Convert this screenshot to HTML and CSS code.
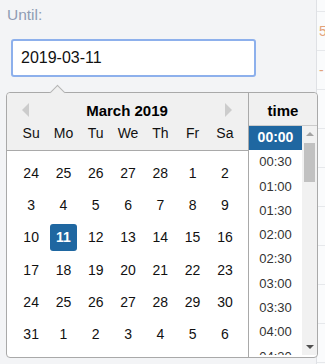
FILE: index.html
```html
<!DOCTYPE html>
<html lang="en">
<head>
    <meta charset="UTF-8">
    <meta name="viewport" content="width=device-width, initial-scale=1.0">
    <title>Until date picker</title>
    <link rel="stylesheet" href="styles.css">
</head>
<body>

    <div class="page">
        <!-- Filter form -->
        <div class="form-col">
            <label class="field-label" for="until">Until:</label>
            <div class="input-wrap">
                <input type="text" id="until" class="date-input" value="2019-03-11">

                <!-- Date/time picker popup -->
                <div class="picker">
                    <div class="picker-arrow"></div>

                    <div class="calendar">
                        <div class="cal-head">
                            <div class="cal-title">
                                <span class="nav prev"></span>
                                <span class="month">March 2019</span>
                                <span class="nav next"></span>
                            </div>
                            <div class="cal-grid weekdays">
                                <span>Su</span><span>Mo</span><span>Tu</span><span>We</span><span>Th</span><span>Fr</span><span>Sa</span>
                            </div>
                        </div>
                        <div class="cal-grid days" id="days"></div>
                    </div>

                    <div class="times">
                        <div class="times-head">time</div>
                        <div class="times-body">
                            <ul class="time-list" id="timeList"></ul>
                            <div class="scrollbar">
                                <span class="sb-arrow up"></span>
                                <span class="sb-thumb"></span>
                                <span class="sb-arrow down"></span>
                            </div>
                        </div>
                    </div>
                </div>
            </div>
        </div>

        <!-- Table behind, mostly hidden -->
        <div class="side-table">
            <div class="side-row first"></div>
            <div class="side-row"><span class="mark">5</span></div>
            <div class="side-row"><span class="mark">-</span></div>
            <div class="side-row"></div>
            <div class="side-row"></div>
            <div class="side-row"></div>
            <div class="side-row"></div>
            <div class="side-row"></div>
            <div class="side-row"></div>
            <div class="side-row"></div>
        </div>
    </div>

    <script>
        // March 2019 grid, starting on Sunday Feb 24
        var days = [24, 25, 26, 27, 28];
        for (var d = 1; d <= 31; d++) days.push(d);
        for (var n = 1; n <= 6; n++) days.push(n);

        var daysDiv = document.getElementById("days");
        days.forEach(function (day, i) {
            var cell = document.createElement("span");
            cell.className = "day";
            if (i === 15) cell.className += " selected";
            cell.textContent = day;
            daysDiv.appendChild(cell);
        });

        // only the slots that show in the list
        var list = document.getElementById("timeList");
        for (var h = 0; h < 5; h++) {
            ["00", "30"].forEach(function (m) {
                var li = document.createElement("li");
                li.textContent = ("0" + h).slice(-2) + ":" + m;
                if (h === 0 && m === "00") li.className = "selected";
                list.appendChild(li);
            });
        }
    </script>

</body>
</html>
```

FILE: styles.css
```css
/* General */
body {
    margin: 0;
    font-family: 'Liberation Sans', Arial, sans-serif;
    background: #f3f4f6;
    color: #333;
}

.page {
    display: flex;
    height: 364px;
    overflow: hidden;
}

.form-col {
    width: 316px;
    flex: none;
    border-right: 1px solid #dfe1e5;
}

.field-label {
    display: block;
    padding: 6px 0 0 7px;
    font-size: 15.5px;
    line-height: 17px;
    color: #8f9cb4;
}

/* Input */
.input-wrap {
    position: relative;
    margin: 16px 0 0 11px;
}

.date-input {
    display: block;
    box-sizing: border-box;
    width: 245px;
    height: 38px;
    padding: 0 8px;
    font-family: inherit;
    font-size: 16px;
    color: #111;
    background: white;
    border: 2px solid #8db0ec;
    border-radius: 3px;
    outline: none;
}

/* Picker popup */
.picker {
    position: absolute;
    top: 53px;
    left: -5px;
    width: 312px;
    height: 266px;
    box-sizing: border-box;
    display: flex;
    background: white;
    border: 1px solid #a9a9a9;
    border-radius: 4px;
    font-size: 13px;
}

.picker-arrow {
    position: absolute;
    top: -6px;
    left: 45px;
    width: 10px;
    height: 10px;
    background: #f0f0f0;
    border-top: 1px solid #b5b5b5;
    border-left: 1px solid #b5b5b5;
    transform: rotate(45deg);
}

/* Calendar */
.calendar {
    width: 241px;
    flex: none;
    border-right: 1px solid #a9a9a9;
}

.cal-head {
    height: 58px;
    box-sizing: border-box;
    background: #f0f0f0;
    border-bottom: 1px solid #a9a9a9;
    border-radius: 4px 0 0 0;
    padding-top: 8px;
}

.cal-title {
    display: flex;
    align-items: center;
    justify-content: space-between;
    padding: 0 16px 0 15px;
    height: 18px;
}

.month {
    font-weight: bold;
    font-size: 15px;
    color: #000;
}

.nav {
    width: 0;
    height: 0;
    border-top: 7px solid transparent;
    border-bottom: 7px solid transparent;
}

.prev {
    border-right: 7px solid #ccc;
}

.next {
    border-left: 7px solid #ccc;
}

.cal-grid {
    display: grid;
    grid-template-columns: repeat(7, 32.3px);
    padding: 0 8px;
    text-align: center;
}

.weekdays {
    margin-top: 5px;
    line-height: 18px;
    font-size: 14px;
    color: #111;
}

.days {
    padding-top: 6px;
    grid-auto-rows: 32.3px;
    align-items: center;
    justify-items: center;
    font-size: 14px;
}

.day {
    width: 27px;
    height: 27px;
    line-height: 27px;
    color: #111;
}

.day.selected {
    background: #1f67a1;
    color: white;
    font-weight: bold;
    border-radius: 3px;
}

/* Time column */
.times {
    flex: 1;
    display: flex;
    flex-direction: column;
}

.times-head {
    height: 33px;
    box-sizing: border-box;
    padding-top: 9px;
    text-align: center;
    font-weight: bold;
    font-size: 15px;
    color: #000;
    background: #f0f0f0;
    border-bottom: 1px solid #ccc;
    border-radius: 0 4px 0 0;
}

.times-body {
    flex: 1;
    display: flex;
    overflow: hidden;
    margin-bottom: 2px;
}

.time-list {
    flex: 1;
    margin: 0;
    padding: 0;
    list-style: none;
    overflow: hidden;
}

.time-list li {
    height: 24.3px;
    line-height: 23px;
    text-align: center;
    color: #333;
}

.time-list li.selected {
    background: #1f67a1;
    color: white;
    font-weight: bold;
    font-size: 14px;
}

/* Fake scrollbar */
.scrollbar {
    width: 15px;
    flex: none;
    position: relative;
    background: #f1f1f1;
}

.sb-arrow {
    position: absolute;
    left: 4px;
    width: 0;
    height: 0;
    border-left: 4px solid transparent;
    border-right: 4px solid transparent;
}

.sb-arrow.up {
    top: 6px;
    border-bottom: 4px solid #a3a3a3;
}

.sb-arrow.down {
    bottom: 6px;
    border-top: 4px solid #505050;
}

.sb-thumb {
    position: absolute;
    top: 17px;
    left: 2px;
    width: 11px;
    height: 39px;
    background: #c1c1c1;
}

/* Background table */
.side-table {
    flex: 1;
    background: #fafbfc;
}

.side-row {
    height: 38px;
    border-bottom: 1px solid #e6e8eb;
    font-size: 14px;
    line-height: 38px;
}

.side-row.first {
    height: 11px;
}

.mark {
    color: #e3a37a;
    margin-left: 2px;
}
```
